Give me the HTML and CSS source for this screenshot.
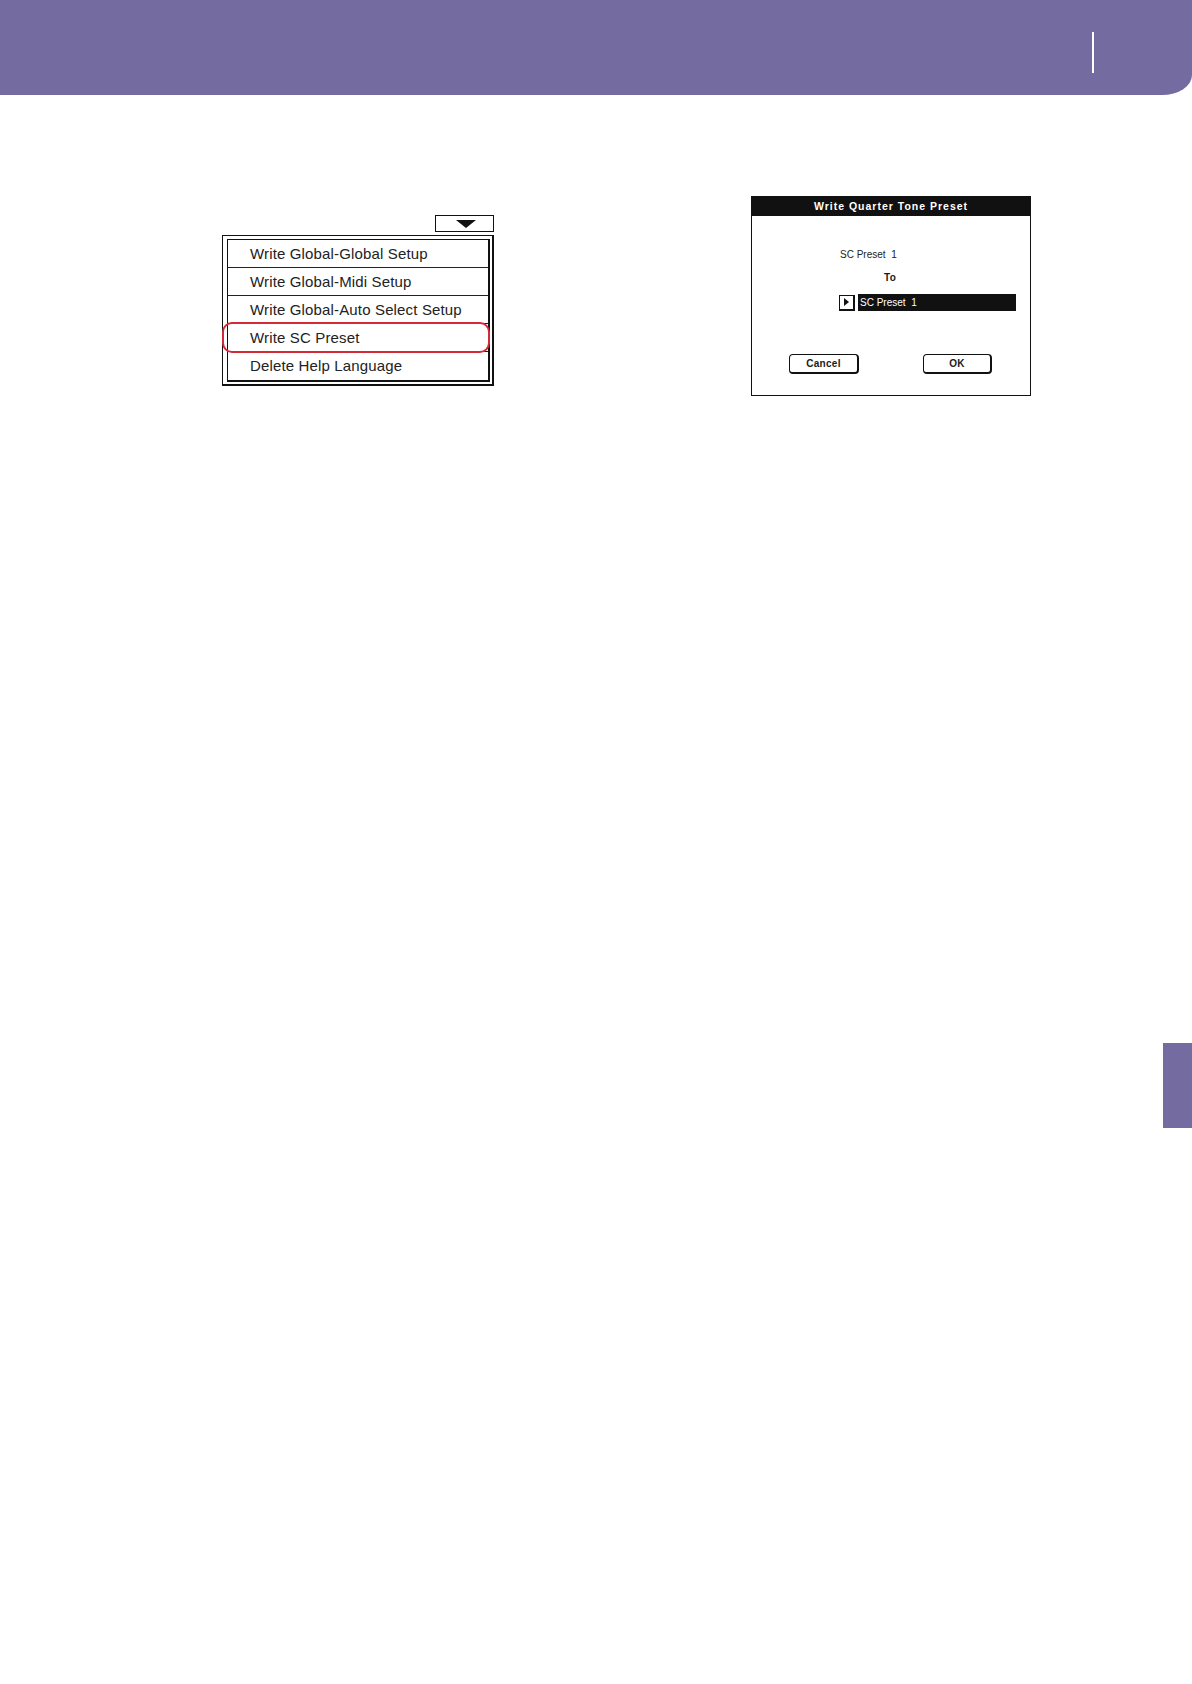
FILE: index.html
```html
<!DOCTYPE html>
<html>
<head>
<meta charset="utf-8">
<title>Write SC Preset</title>
<link rel="stylesheet" href="styles.css">
</head>
<body>
<header class="band">
  <span class="band-rule"></span>
</header>

<main class="figures">
  <section class="menu-col">
    <div class="menu-arrow"><span class="tri-down"></span></div>
    <div class="menu">
      <ul class="menu-list">
        <li class="menu-item">Write Global-Global Setup</li>
        <li class="menu-item">Write Global-Midi Setup</li>
        <li class="menu-item">Write Global-Auto Select Setup</li>
        <li class="menu-item">Write SC Preset</li>
        <li class="menu-item">Delete Help Language</li>
      </ul>
      <div class="highlight"></div>
    </div>
  </section>

  <section class="dialog">
    <div class="dialog-title">Write Quarter Tone Preset</div>
    <div class="dialog-source">SC Preset  1</div>
    <div class="dialog-to">To</div>
    <div class="dialog-target">
      <span class="target-arrow"><span class="tri-right"></span></span>
      <span class="target-field">SC Preset  1</span>
    </div>
    <div class="dialog-buttons">
      <span class="btn btn-cancel">Cancel</span>
      <span class="btn btn-ok">OK</span>
    </div>
  </section>
</main>

<div class="edge">
  <div class="thumb"></div>
</div>
</body>
</html>
```

FILE: styles.css
```css
* { box-sizing: border-box; }

html, body {
  margin: 0;
  padding: 0;
  background: #ffffff;
}

body {
  width: 1192px;
  min-height: 1684px;
  font-family: "Liberation Sans", Arial, sans-serif;
  color: #1a1a1a;
}

.band {
  height: 95px;
  background: #746ca1;
  border-bottom-right-radius: 30px 20px;
  display: flex;
  justify-content: flex-end;
  padding-top: 32px;
  padding-right: 98px;
}

.band-rule {
  display: block;
  width: 2px;
  height: 41px;
  background: #ffffff;
}

.figures {
  display: flex;
  align-items: flex-start;
  padding-top: 101px;
  padding-left: 222px;
}

/* ---------- menu ---------- */
.menu-col {
  width: 272px;
  margin-top: 19px;
  margin-right: 257px;
  display: flex;
  flex-direction: column;
}

.menu-arrow {
  align-self: flex-end;
  width: 59px;
  height: 17px;
  border: 1px solid #111;
  display: flex;
  justify-content: center;
  padding-top: 4px;
  padding-left: 2px;
}

.tri-down {
  width: 0;
  height: 0;
  border-left: 10px solid transparent;
  border-right: 10px solid transparent;
  border-top: 8px solid #111;
}

.menu {
  position: relative;
  margin-top: 3px;
  width: 272px;
  border: 1px solid #111;
  border-right-width: 2px;
  border-bottom-width: 2px;
  padding: 3px 2px 2px 4px;
}

.menu-list {
  list-style: none;
  margin: 0;
  padding: 0;
  border: 1px solid #111;
  border-right-width: 2px;
  border-bottom-width: 2px;
}

.menu-item {
  height: 28px;
  line-height: 27px;
  padding-left: 22px;
  border-bottom: 1px solid #222;
  font-size: 15px;
  letter-spacing: 0.15px;
  color: #222;
  white-space: nowrap;
}

.menu-item:last-child {
  border-bottom: none;
  height: 28px;
}

.highlight {
  position: absolute;
  top: 86px;
  left: -1px;
  width: 268px;
  height: 31px;
  border: 2px solid #d22a36;
  border-radius: 10px;
}

/* ---------- dialog ---------- */
.dialog {
  width: 280px;
  border: 1px solid #111;
  display: flex;
  flex-direction: column;
  padding-bottom: 21px;
}

.dialog-title {
  height: 19px;
  background: #111;
  color: #fff;
  font-size: 10.5px;
  font-weight: bold;
  letter-spacing: 1px;
  line-height: 19px;
  text-align: center;
}

.dialog-source {
  margin-top: 33px;
  margin-left: 88px;
  height: 12px;
  line-height: 12px;
  font-size: 10px;
  white-space: pre;
  color: #222;
}

.dialog-to {
  margin-top: 11px;
  margin-left: 132px;
  height: 12px;
  line-height: 12px;
  font-size: 10px;
  font-weight: bold;
  letter-spacing: 0.4px;
}

.dialog-target {
  margin-top: 10px;
  margin-left: 87px;
  height: 17px;
  display: flex;
  align-items: center;
  gap: 3px;
}

.target-arrow {
  width: 16px;
  height: 16px;
  border: 1px solid #111;
  border-right-width: 2px;
  border-bottom-width: 2px;
  display: flex;
  align-items: center;
  justify-content: center;
}

.tri-right {
  width: 0;
  height: 0;
  border-top: 4px solid transparent;
  border-bottom: 4px solid transparent;
  border-left: 5px solid #111;
}

.target-field {
  width: 158px;
  height: 17px;
  background: #111;
  color: #fff;
  font-size: 10px;
  line-height: 17px;
  padding-left: 2px;
  white-space: pre;
}

.dialog-buttons {
  margin-top: 43px;
  margin-left: 37px;
  display: flex;
  gap: 64px;
}

.btn {
  height: 20px;
  border: 1px solid #111;
  border-right-width: 2px;
  border-bottom-width: 2px;
  border-radius: 4px;
  font-size: 10px;
  font-weight: bold;
  letter-spacing: 0.3px;
  line-height: 17px;
  text-align: center;
}

.btn-cancel { width: 70px; }
.btn-ok { width: 69px; }

/* ---------- side thumb ---------- */
.edge {
  display: flex;
  justify-content: flex-end;
  margin-top: 647px;
}

.thumb {
  width: 29px;
  height: 85px;
  background: #746ca1;
}
```
